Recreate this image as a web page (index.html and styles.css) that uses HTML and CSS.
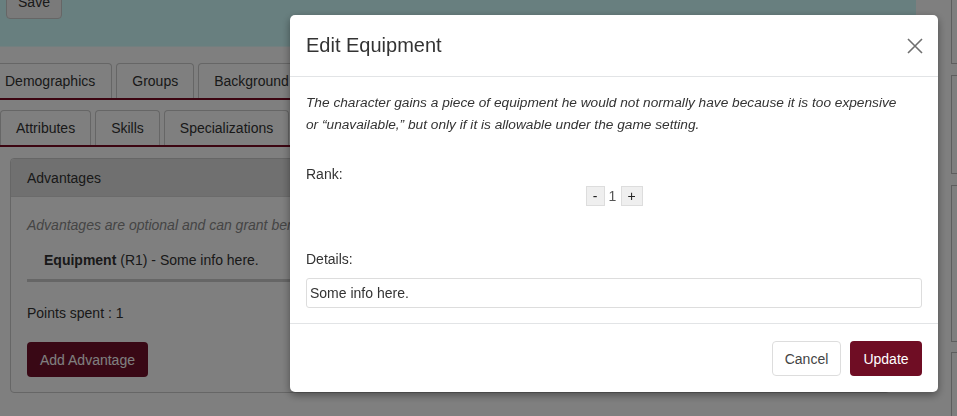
FILE: index.html
```html
<!DOCTYPE html>
<html>
<head>
<meta charset="utf-8">
<link rel="stylesheet" href="styles.css">
</head>
<body>
<div class="page">
  <div class="main">
    <div class="topbar">
      <button class="btn-save">Save</button>
    </div>
    <div class="tabs tabs-first">
      <div class="tab">Demographics</div>
      <div class="tab">Groups</div>
      <div class="tab">Background</div>
    </div>
    <div class="tabs tabs-second">
      <div class="tab">Attributes</div>
      <div class="tab">Skills</div>
      <div class="tab">Specializations</div>
    </div>
    <div class="panel">
      <div class="panel-heading">Advantages</div>
      <div class="panel-body">
        <p class="hint">Advantages are optional and can grant benefits.</p>
        <div class="adv-item"><b>Equipment</b> (R1) - Some info here.</div>
        <div class="adv-rule"></div>
        <p class="points">Points spent : 1</p>
        <button class="btn-maroon">Add Advantage</button>
      </div>
    </div>
  </div>
  <div class="side">
    <div class="side-card card-a"></div>
    <div class="side-card card-b"></div>
    <div class="side-card card-c"></div>
    <div class="side-card card-d"></div>
  </div>
</div>

<div class="backdrop"></div>

<div class="modal">
  <div class="modal-header">
    <h5 class="modal-title">Edit Equipment</h5>
    <button class="close" aria-label="Close">
      <svg width="16" height="16" viewBox="0 0 16 16"><path d="M1 1 L15 15 M15 1 L1 15" stroke="#6f6f6f" stroke-width="1.6" fill="none"/></svg>
    </button>
  </div>
  <div class="modal-body">
    <p class="desc">The character gains a piece of equipment he would not normally have because it is too expensive or “unavailable,” but only if it is allowable under the game setting.</p>
    <div class="label rank-label">Rank:</div>
    <div class="spinner">
      <button class="spin-btn minus">-</button>
      <span class="spin-val">1</span>
      <button class="spin-btn plus">+</button>
    </div>
    <div class="label details-label">Details:</div>
    <input class="text-input" type="text" value="Some info here.">
  </div>
  <div class="modal-footer">
    <button class="btn-cancel">Cancel</button>
    <button class="btn-update">Update</button>
  </div>
</div>
</body>
</html>
```
FILE: styles.css
```css
* { box-sizing: border-box; }
html, body { margin: 0; padding: 0; }
body {
  width: 957px;
  height: 416px;
  overflow: hidden;
  background: #ffffff;
  font-family: "Liberation Sans", Arial, sans-serif;
  font-size: 14px;
  color: #333333;
}
button { font-family: inherit; font-size: 14px; }
.page { display: flex; width: 957px; align-items: flex-start; }
.main { width: 916px; flex: none; overflow: hidden; }
.topbar {
  display: flex;
  align-items: flex-start;
  height: 47px;
  background: #d1ffff;
  border-bottom: 1px solid #e4ffff;
  padding-left: 6px;
}
.btn-save {
  margin-top: -15px;
  width: 56px;
  height: 34px;
  background: #f4f4f4;
  border: 1px solid #cccccc;
  border-radius: 4px;
  color: #333;
}
.tabs {
  display: flex;
  gap: 4px;
  border-bottom: 2px solid #780a22;
}
.tabs-first { margin-top: 16px; margin-left: -12px; }
.tabs-second { margin-top: 10px; }
.tab {
  height: 35px;
  padding: 0 15px;
  line-height: 35px;
  border: 1px solid #cccccc;
  border-bottom: none;
  border-radius: 4px 4px 0 0;
  color: #333;
  white-space: nowrap;
}
.tabs-first .tab:first-child { padding-left: 16px; padding-right: 16px; }
.panel {
  margin: 11px 0 0 10px;
  width: 880px;
  border: 1px solid #cccccc;
  border-radius: 4px;
}
.panel-heading {
  height: 38px;
  line-height: 38px;
  padding-left: 16px;
  background: #e0e0e0;
  border-bottom: 1px solid #d6d6d6;
  border-radius: 4px 4px 0 0;
}
.panel-body { padding: 17px 16px 15px 16px; }
.hint { margin: 0; line-height: 22px; font-style: italic; color: #8a8a8a; white-space: nowrap; }
.adv-item { margin-top: 13px; padding-left: 17px; line-height: 22px; }
.adv-rule { margin-top: 8px; height: 3px; background: #cccccc; }
.points { margin: 20px 0 0; line-height: 22px; }
.btn-maroon {
  margin-top: 18px;
  height: 35px;
  padding: 0 13px;
  background: #72102a;
  color: #ffffff;
  border: none;
  border-radius: 4px;
}
.side { flex: 1; padding-left: 35px; }
.side-card {
  border-left: 1px solid #bdbdbd;
  border-top: 1px solid #bdbdbd;
  border-bottom: 1px solid #bdbdbd;
  height: 100px;
}
.card-a { height: 64px; border-top: none; }
.card-b { margin-top: 11px; height: 99px; }
.card-c { margin-top: 11px; height: 157px; }
.card-d { margin-top: 10px; height: 100px; border-bottom: none; }

.backdrop {
  position: fixed;
  inset: 0;
  background: rgba(0, 0, 0, 0.5);
}
.modal {
  position: fixed;
  left: 290px;
  top: 15px;
  width: 648px;
  background: #ffffff;
  border-radius: 5px;
  box-shadow: 0 3px 9px rgba(0, 0, 0, 0.4);
}
.modal-header {
  display: flex;
  justify-content: space-between;
  align-items: center;
  padding: 16px;
  border-bottom: 1px solid #e2e4e6;
}
.modal-title {
  margin: 0;
  font-size: 20px;
  font-weight: normal;
  line-height: 29px;
  color: #333;
}
.close {
  border: none;
  background: transparent;
  padding: 0;
  width: 16px;
  height: 16px;
  margin-right: -1px;
  display: flex;
}
.modal-body { padding: 15px 16px 15px; }
.desc { margin: 0; max-width: 598px; font-style: italic; font-size: 13.7px; line-height: 22px; color: #333; }
.label { line-height: 22px; color: #333; }
.rank-label { margin-top: 27px; }
.spinner {
  display: flex;
  justify-content: center;
  align-items: center;
  margin-top: 1px;
}
.spin-btn {
  height: 20px;
  padding: 0;
  background: #efefef;
  border: 1px solid #dddddd;
  color: #222;
  line-height: 18px;
}
.minus { width: 19px; }
.plus { width: 22px; }
.spin-val { width: 16px; text-align: center; line-height: 20px; color: #555; }
.details-label { margin-top: 42px; }
.text-input {
  display: block;
  margin-top: 8px;
  width: 100%;
  height: 30px;
  border: 1px solid #dddddd;
  border-radius: 3px;
  padding: 0 3px;
  font-family: inherit;
  font-size: 14px;
  color: #333;
}
.modal-footer {
  display: flex;
  justify-content: flex-end;
  gap: 9px;
  padding: 17px 16px 16px;
  border-top: 1px solid #e2e4e6;
}
.btn-cancel {
  height: 35px;
  width: 69px;
  background: #ffffff;
  border: 1px solid #dddddd;
  border-radius: 4px;
  color: #444;
}
.btn-update {
  height: 35px;
  width: 72px;
  background: #6f0d24;
  border: none;
  border-radius: 4px;
  color: #ffffff;
}
```
